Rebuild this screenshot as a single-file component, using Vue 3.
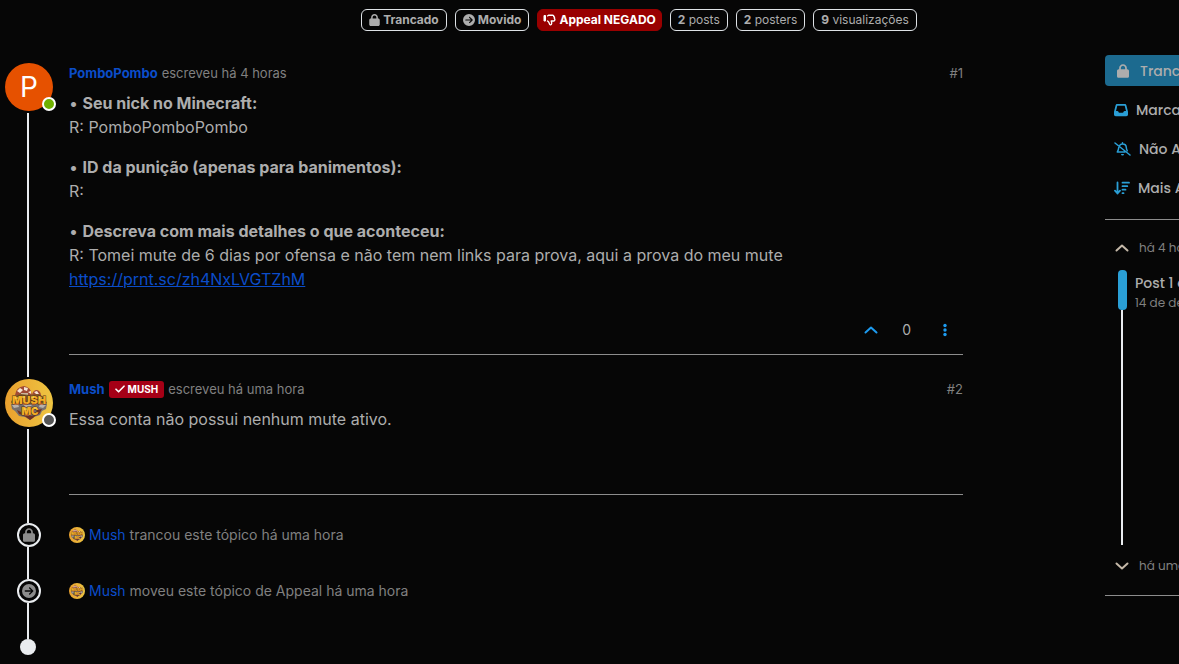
<script setup>
import { h } from 'vue'

const paths = {
  lock: ['0 0 448 512', 'M144 144v48H304V144c0-44.2-35.8-80-80-80s-80 35.8-80 80zM80 192V144C80 64.5 144.5 0 224 0s144 64.5 144 144v48h16c35.3 0 64 28.7 64 64V448c0 35.3-28.7 64-64 64H64c-35.3 0-64-28.7-64-64V256c0-35.3 28.7-64 64-64H80z'],
  move: ['0 0 512 512', 'M0 256a256 256 0 1 0 512 0A256 256 0 1 0 0 256zM297 385c-9.4 9.4-24.6 9.4-33.9 0s-9.4-24.6 0-33.9l71-71L120 280c-13.3 0-24-10.7-24-24s10.7-24 24-24l214.1 0-71-71c-9.4-9.4-9.4-24.6 0-33.9s24.6-9.4 33.9 0L409 239c9.4 9.4 9.4 24.6 0 33.9L297 385z'],
  inbox: ['0 0 512 512', 'M121 32C91.6 32 66 52 58.9 80.5L1.9 308.4C.6 313.5 0 318.7 0 323.9V416c0 35.3 28.7 64 64 64H448c35.3 0 64-28.7 64-64V323.9c0-5.2-.6-10.4-1.9-15.5l-57-227.9C446 52 420.4 32 391 32H121zm0 64H391l48 192H387.8c-12.1 0-23.2 6.8-28.6 17.7l-14.3 28.6c-5.4 10.8-16.5 17.7-28.6 17.7H195.8c-12.1 0-23.2-6.8-28.6-17.7l-14.3-28.6c-5.4-10.8-16.5-17.7-28.6-17.7H73L121 96z']
}

const Icon = (props) =>
  h('svg', { viewBox: paths[props.name][0], fill: 'currentColor', 'aria-hidden': 'true' }, [
    h('path', { d: paths[props.name][1] })
  ])
Icon.props = ['name']

const MushLogo = () =>
  h('svg', { viewBox: '0 0 48 48', 'aria-hidden': 'true' }, [
    h('defs', [
      h('linearGradient', { id: 'gold', x1: 0, y1: 0, x2: 1, y2: 0 }, [
        h('stop', { offset: '0', 'stop-color': '#e9a02e' }),
        h('stop', { offset: '1', 'stop-color': '#eec542' })
      ])
    ]),
    h('circle', { cx: 24, cy: 24, r: 24, fill: 'url(#gold)' }),
    h('path', { d: 'M10 16q1-8 9-9 7 1 8 9zM27 16q1-5 5-5 4 1 4 6z', fill: '#a04a35' }),
    h('path', { d: 'M12 12l3-3 3 2-3 3zM19 8l4 1-1 3-3-1zM23 13l3-1v3zM29 13l3-1 2 3-3 0z', fill: '#f6e4d2' }),
    h('path', { d: 'M16 14h7v4h-7z', fill: '#c9b49c' }),
    h('path', { d: 'M9 17l7-2 8 1 9-1 6 3 3 6-3 3H8l-2-4z', fill: '#7c5526' }),
    h('path', { d: 'M6 25h36l-1 5-4 2-2 4-6 2-4 3-5-3-6-1-4-5-3-2z', fill: '#77706d' }),
    h('path', { d: 'M7 26l6-1 1 3-5 1zM35 25l6 1-3 3-4-1zM19 26l8 0-2 2-5 0z', fill: '#b9b2ab' }),
    h('path', { d: 'M12 31l4 2 1 3-3-1zM32 31l5-1-3 5-4 1zM17 36l4 1 4 0 6-1-3 3-3 2-4-3z', fill: '#6f2f22' }),
    h('text', { x: 24, y: 25, class: 'logo-line logo-top' }, 'MUSH'),
    h('text', { x: 25, y: 36, class: 'logo-line logo-bottom' }, 'MC'),
    h('path', { d: 'M10 19h3M17 18h3M26 18h3M34 19h3M19 30h3M29 29h3', stroke: '#ffe65a', 'stroke-width': 1.2 }),
    h('path', { d: 'M9 25h5M18 25h4M27 25h3M34 25h4M20 36h4', stroke: '#d9641e', 'stroke-width': 1 })
  ])

const events = [
  { icon: 'lock', text: 'trancou este tópico há uma hora' },
  { icon: 'move', text: 'moveu este tópico de Appeal há uma hora' }
]
const stats = [
  { count: 2, label: 'posts' },
  { count: 2, label: 'posters' },
  { count: 9, label: 'visualizações' }
]
</script>

<template>
  <div class="page">
    <header class="badges">
      <span class="badge strong"><Icon name="lock" class="badge-lock" />Trancado</span>
      <span class="badge strong"><Icon name="move" class="badge-move" />Movido</span>
      <a href="#" class="badge strong denied">
        <svg class="thumb" viewBox="0 0 13 12" fill="none" stroke="currentColor" aria-hidden="true">
          <path d="M1 1.500h1.500v5.500H1z" fill="currentColor" stroke-width="1" />
          <path d="M4.200 2.200 5.500 1.200h4c1 0 1.400.7 1.200 1.300.8.300 1 1.200.6 1.700.9.700.8 2.800-.7 2.800H8.200c.6 1.300.8 3.400-.5 3.800-1.200.3-1.300-1-1.600-1.900C5.700 7.700 5 7.300 4.200 6.600" stroke-width="1.400" stroke-linejoin="round" />
        </svg>Appeal NEGADO
      </a>
      <span v-for="s in stats" :key="s.label" class="badge"><b>{{ s.count }}</b>&nbsp;{{ s.label }}</span>
    </header>

    <div class="columns">
      <main class="timeline">
        <article class="row">
          <div class="rail">
            <div class="avatar letter">P<i class="status online"></i></div>
            <span class="line spaced"></span>
          </div>
          <div class="post first">
            <div class="meta">
              <a href="#" class="author">PomboPombo</a>
              <span>escreveu há 4 horas</span>
              <a href="#" class="index">#1</a>
            </div>
            <div class="content">
              <p>• <b>Seu nick no Minecraft:</b><br />R: PomboPomboPombo</p>
              <p>• <b>ID da punição (apenas para banimentos):</b><br />R:</p>
              <p>• <b>Descreva com mais detalhes o que aconteceu:</b><br />R: Tomei mute de 6 dias por ofensa e não tem nem links para prova, aqui a prova do meu mute<br /><a href="#">https://prnt.sc/zh4NxLVGTZhM</a></p>
            </div>
            <div class="actions">
              <button type="button" aria-label="Votar">
                <svg width="14" height="8" viewBox="0 0 14 8" fill="none" stroke="currentColor" stroke-width="2" stroke-linecap="round" stroke-linejoin="round"><path d="M1.500 6.500 7 1.500l5.500 5" /></svg>
              </button>
              <span class="votes">0</span>
              <button type="button" aria-label="Mais opções">
                <svg width="4" height="14" viewBox="0 0 4 14" fill="currentColor"><circle cx="2" cy="2.500" r="1.700" /><circle cx="2" cy="7" r="1.700" /><circle cx="2" cy="11.500" r="1.700" /></svg>
              </button>
            </div>
          </div>
        </article>

        <article class="row">
          <div class="rail">
            <div class="avatar"><MushLogo class="logo" /><i class="status"></i></div>
            <span class="line after-avatar"></span>
          </div>
          <div class="post second">
            <div class="meta">
              <a href="#" class="author">Mush</a>
              <a href="#" class="group">
                <svg width="10" height="8" viewBox="0 0 10 8" fill="none" stroke="currentColor" stroke-width="1.600" stroke-linecap="round" stroke-linejoin="round" aria-hidden="true"><path d="M1 4.200 3.600 6.800 9 1.200" /></svg>MUSH
              </a>
              <span>escreveu há uma hora</span>
              <a href="#" class="index">#2</a>
            </div>
            <div class="content"><p>Essa conta não possui nenhum mute ativo.</p></div>
          </div>
        </article>

        <div v-for="e in events" :key="e.icon" class="row">
          <div class="rail">
            <span class="marker"><Icon :name="e.icon" :class="'marker-' + e.icon" /></span>
            <span class="line"></span>
          </div>
          <div class="event">
            <MushLogo class="mini" /><a href="#">Mush</a><span>{{ e.text }}</span>
          </div>
        </div>
        <div class="rail end"><span class="line"></span><span class="dot"></span></div>
      </main>

      <aside class="sidebar">
        <div class="tools">
          <button type="button" class="tool primary"><Icon name="lock" class="tool-lock" />Trancado</button>
          <button type="button" class="tool"><Icon name="inbox" class="tool-inbox" />Marcar como não lido</button>
          <button type="button" class="tool">
            <svg width="17" height="14" viewBox="0 0 17 14" fill="none" stroke="currentColor" stroke-width="1.500" stroke-linecap="round" stroke-linejoin="round" aria-hidden="true">
              <path d="M1 1l15 12M5.500 3.600C6.200 2.400 7.300 1.900 8.500 1.900c2.200 0 3.800 1.600 3.800 3.700 0 1.300.4 2.300 1 3.200M8.500.8v1M4.700 5.600c0 2-.6 3-1.400 4.400h7.600" />
              <path d="M7 12h3a1.500 1.500 0 0 1-3 0z" fill="currentColor" stroke="none" />
            </svg>Não Acompanhando
          </button>
          <button type="button" class="tool">
            <svg width="16" height="14" viewBox="0 0 16 14" fill="none" stroke="currentColor" stroke-width="1.800" stroke-linecap="round" stroke-linejoin="round" aria-hidden="true">
              <path d="M3.500 1.500v11M1 9.700l2.500 2.800L6 9.700M8.500 1.700H15M8.500 5.200h4.800M8.500 8.700h3M8.500 12.200h1" />
            </svg>Mais Antigo para Mais Recente
          </button>
        </div>
        <nav class="pager" aria-label="Navegação de posts">
          <a href="#" class="jump">
            <svg width="14" height="8" viewBox="0 0 14 8" fill="none" stroke="currentColor" stroke-width="2" stroke-linecap="round" stroke-linejoin="round" aria-hidden="true"><path d="M1.500 6.500 7 1.500l5.500 5" /></svg>há 4 horas
          </a>
          <div class="scroller">
            <div class="track"><span class="knob"></span><span class="guide"></span></div>
            <div class="position"><strong>Post 1 de 2</strong><small>14 de dez. de 2024</small></div>
          </div>
          <a href="#" class="jump">
            <svg width="14" height="8" viewBox="0 0 14 8" fill="none" stroke="currentColor" stroke-width="2" stroke-linecap="round" stroke-linejoin="round" aria-hidden="true"><path d="M1.500 1.500 7 6.500l5.500-5" /></svg>há uma hora
          </a>
        </nav>
      </aside>
    </div>
  </div>
</template>

<style>
body {
  background: #060606;
}
.logo-line {
  font-family: Inter, sans-serif;
  font-weight: 900;
  text-anchor: middle;
  fill: #f2ad25;
  stroke: #553319;
  stroke-width: 1px;
  paint-order: stroke;
}
.logo-top {
  font-size: 11px;
}
.logo-bottom {
  font-size: 10px;
}
</style>

<style scoped>
.page {
  min-height: 100vh;
  box-sizing: border-box;
  padding: 9px 0;
  overflow: hidden;
  background: #060606;
  color: #adadad;
  font: 16px/24px Inter, "Liberation Sans", sans-serif;
}
a {
  color: #0b4dc9;
  text-decoration: none;
}
button {
  border: 0;
  padding: 0;
  background: none;
  font: inherit;
  color: inherit;
  cursor: pointer;
}
svg {
  flex: none;
}
.badges {
  display: flex;
  justify-content: center;
  gap: 8px;
  padding-left: 99px;
}
.badge {
  display: flex;
  align-items: center;
  box-sizing: border-box;
  height: 22px;
  padding: 0 7px;
  border: 1px solid #dee2e6;
  border-radius: 6px;
  font-size: 12px;
  white-space: nowrap;
}
.strong {
  gap: 3px;
  font-weight: 700;
}
.denied {
  padding: 0 5px;
  border-color: #990000;
  background: #990000;
  color: #fff;
}
.badge-lock {
  width: 11px;
  height: 12px;
}
.badge-move {
  width: 12px;
  height: 12px;
}
.thumb {
  width: 13px;
  height: 12px;
}
.columns {
  display: flex;
  align-items: flex-start;
  gap: 142px;
  padding-top: 24px;
}
.timeline {
  flex: 1;
  min-width: 0;
  padding: 8px 0 0 5px;
}
.row {
  display: flex;
  gap: 16px;
}
.rail {
  display: flex;
  flex-direction: column;
  width: 48px;
  flex: none;
}
.line {
  flex: 1;
  width: 2px;
  margin-left: 22px;
  background: #e9ecef;
}
.spaced {
  margin-top: 2px;
  margin-bottom: 2px;
}
.after-avatar {
  margin-top: 2px;
}
.avatar {
  position: relative;
  width: 48px;
  height: 48px;
  border-radius: 50%;
}
.letter {
  background: #e65100;
  color: #fff;
  font-size: 28px;
  line-height: 48px;
  text-align: center;
}
.logo {
  display: block;
  width: 48px;
  height: 48px;
}
.status {
  position: absolute;
  right: -3px;
  bottom: 0;
  box-sizing: border-box;
  width: 14px;
  height: 14px;
  border: 2px solid #fff;
  border-radius: 50%;
  background: #555;
}
.online {
  background: #6fb000;
}
.post {
  flex: 1;
  min-width: 0;
  border-bottom: 1px solid #8c8c8c;
}
.first {
  margin-bottom: 24px;
}
.second {
  padding-bottom: 63px;
  margin-bottom: 28px;
}
.meta {
  display: flex;
  align-items: center;
  gap: 4px;
  height: 20px;
  font-size: 13px;
  color: #808080;
}
.author {
  font-weight: 700;
}
.index {
  margin-left: auto;
  color: #808080;
}
.group {
  display: flex;
  align-items: center;
  gap: 3px;
  height: 17px;
  padding: 0 6px;
  border-radius: 3px;
  background: #a50016;
  color: #fff;
  font-size: 10px;
  font-weight: 700;
}
.content {
  padding-top: 8px;
}
.content p {
  margin: 0 0 16px;
}
.content p:last-child {
  margin: 0;
}
.content a {
  text-decoration: underline;
}
.actions {
  display: flex;
  justify-content: flex-end;
  align-items: center;
  height: 30px;
  padding: 24px 16px 9px 0;
  font-size: 14px;
}
.actions button {
  display: flex;
  color: #1d9bf0;
}
.votes {
  padding: 0 32px 0 24px;
}
.marker {
  display: flex;
  align-items: center;
  justify-content: center;
  box-sizing: border-box;
  width: 24px;
  height: 24px;
  margin-left: 12px;
  border: 2px solid #e9ecef;
  border-radius: 50%;
  color: #8c8c8c;
}
.marker-lock {
  width: 12px;
  height: 14px;
}
.marker-move {
  width: 14px;
  height: 14px;
}
.event {
  display: flex;
  align-items: center;
  gap: 4px;
  height: 24px;
  margin-bottom: 32px;
  color: #808080;
  font-size: 14px;
}
.mini {
  width: 16px;
  height: 16px;
}
.end {
  height: 20px;
}
.dot {
  width: 16px;
  height: 16px;
  margin-left: 15px;
  border-radius: 50%;
  background: #e9ecef;
}
.sidebar {
  width: 74px;
  flex: none;
  overflow: hidden;
  white-space: nowrap;
  font-family: Poppins, Inter, sans-serif;
}
.tools {
  display: flex;
  flex-direction: column;
  gap: 8px;
  padding-bottom: 16px;
  border-bottom: 1px solid #8c8c8c;
}
.tool {
  display: flex;
  align-items: center;
  gap: 8px;
  height: 31px;
  padding-left: 9px;
  font-size: 14px;
  font-weight: 500;
}
.tool svg {
  color: #2a9fd6;
}
.primary {
  gap: 11px;
  width: 160px;
  padding-left: 12px;
  border-radius: 4px;
  background: #1c6a8f;
}
.tool.primary svg {
  color: #adadad;
}
.tool-lock {
  width: 12px;
  height: 14px;
}
.tool-inbox {
  width: 14px;
  height: 14px;
}
.pager {
  padding: 16px 0 17px;
  border-bottom: 1px solid #8c8c8c;
}
.jump {
  display: flex;
  align-items: center;
  gap: 10px;
  height: 24px;
  padding-left: 10px;
  color: #808080;
  font-size: 12px;
}
.jump svg {
  color: #c4b8a8;
}
.scroller {
  display: flex;
  gap: 8px;
  height: 275px;
  margin: 10px 0 9px;
  padding-left: 13px;
}
.track {
  display: flex;
  flex-direction: column;
  width: 9px;
  flex: none;
}
.knob {
  width: 9px;
  height: 40px;
  border-radius: 4px;
  background: #2a9fd6;
}
.guide {
  flex: 1;
  width: 2px;
  margin-left: 3px;
  background: #e9ecef;
}
.position {
  display: flex;
  flex-direction: column;
  padding-top: 3px;
  line-height: 20px;
}
.position strong {
  font-size: 14px;
  font-weight: 500;
}
.position small {
  color: #808080;
  font-size: 12px;
}
</style>
